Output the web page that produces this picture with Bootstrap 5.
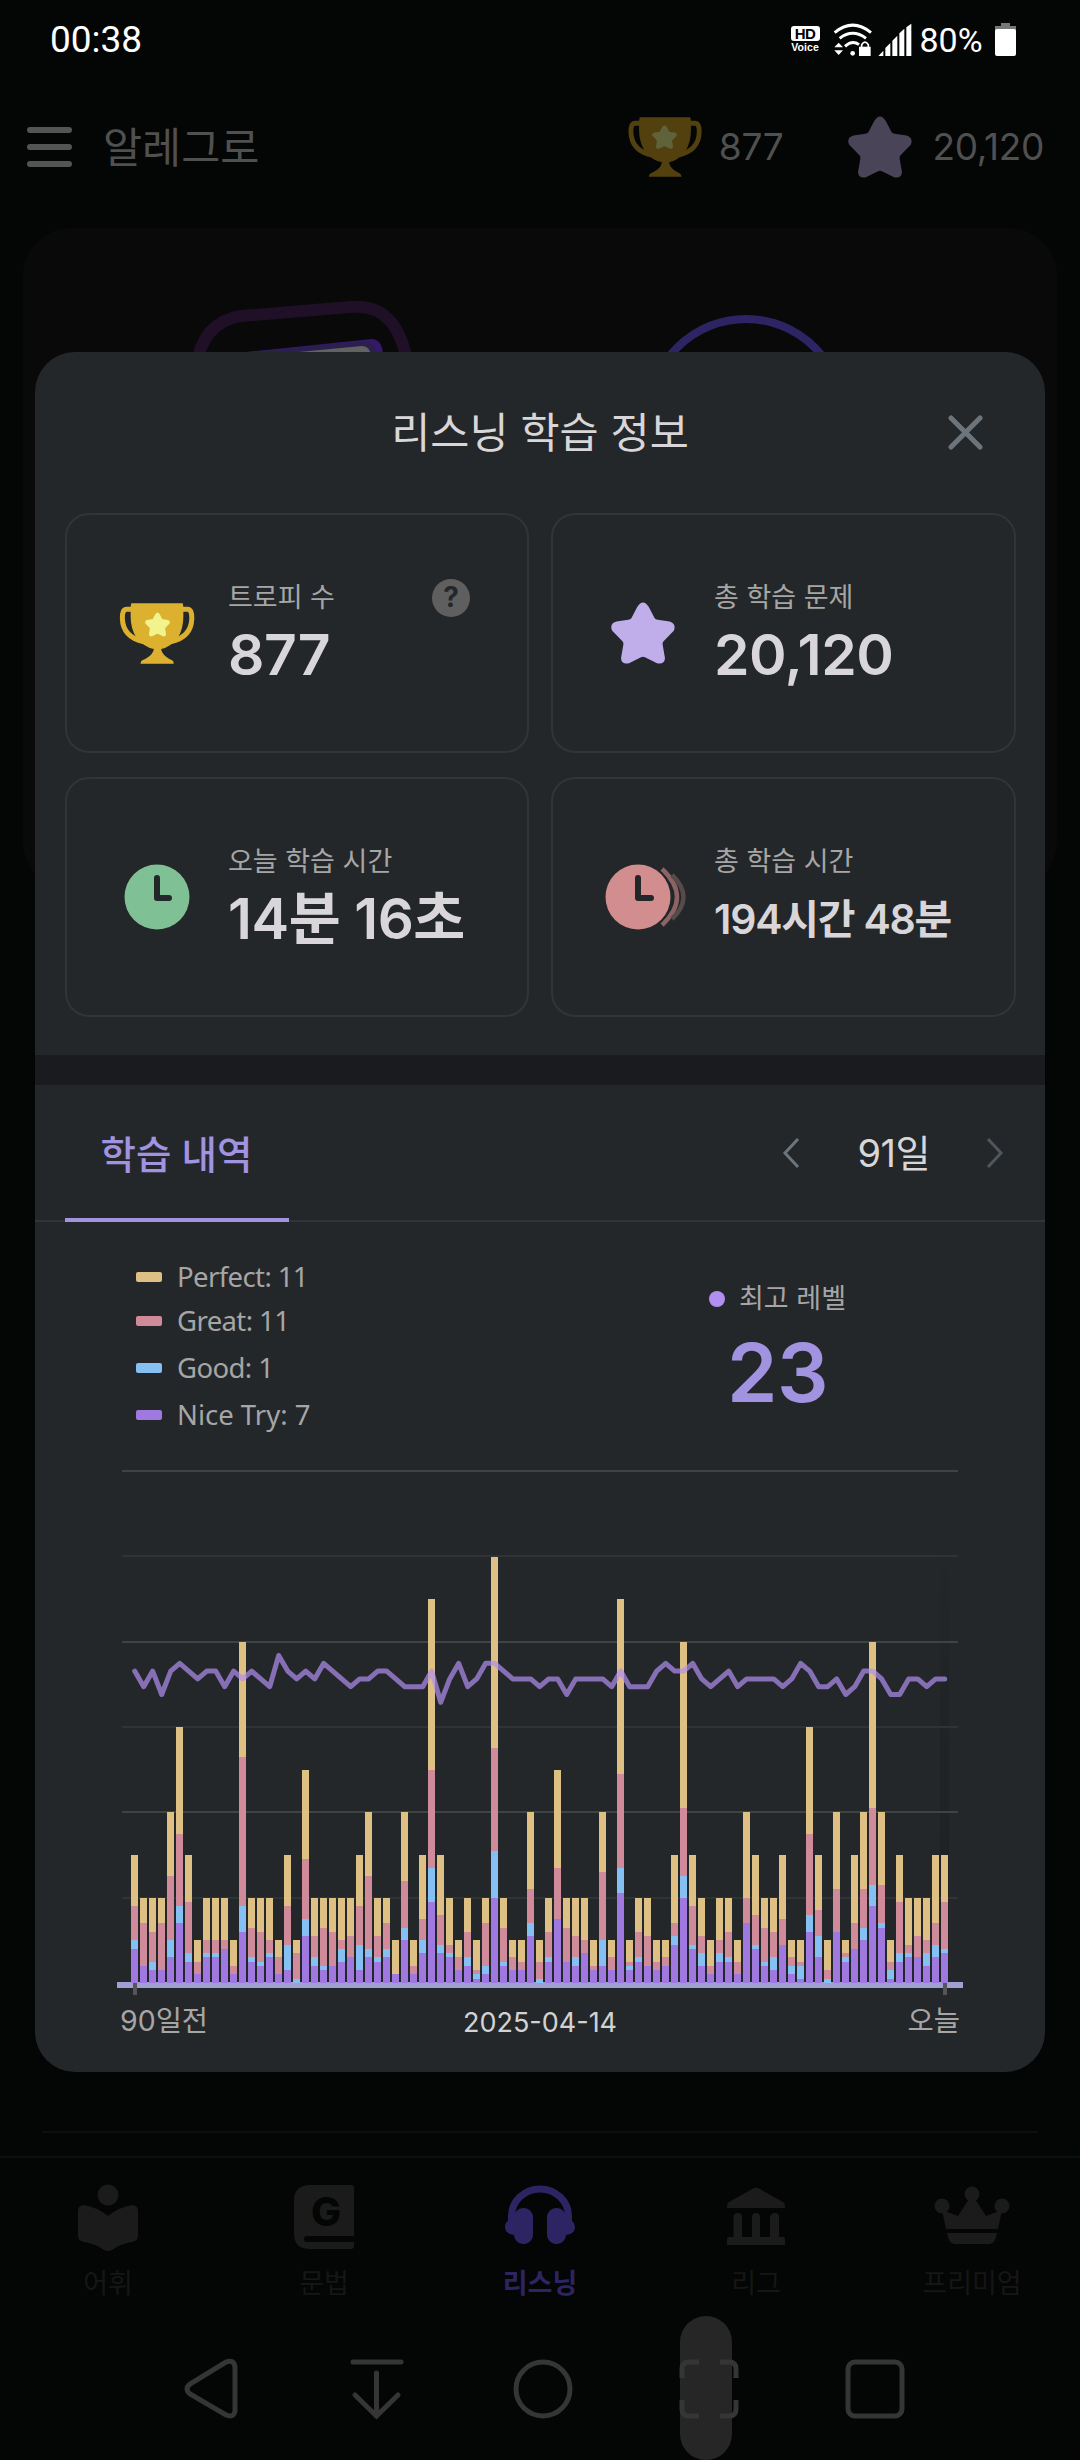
<!DOCTYPE html>
<html lang="ko" data-bs-theme="dark">
<head>
<meta charset="utf-8">
<meta name="viewport" content="width=device-width, initial-scale=1">
<title>리스닝 학습 정보</title>
<link href="https://cdn.jsdelivr.net/npm/bootstrap@5.3.0/dist/css/bootstrap.min.css" rel="stylesheet">
<style>
:root{--ko:"Inter","Noto Sans CJK KR",sans-serif;--panel:#24272a;--edge:#323437;--lav:#a293e0;--txt:#d8d6d8;--dim:#a6a6a6}
body{margin:0;background:#040505;font-family:var(--ko);line-height:1.2}
svg{display:block;flex:none}
.screen{width:1080px;height:2460px}
.statusbar{height:80px;padding:0 64px 0 50px;font-family:Roboto,sans-serif;color:#fff}
.clock-txt{font-size:37px}
.hdv{width:29px;margin-right:13px}
.hd-box{height:15px;background:#fff;color:#000;border-radius:3px;font:700 15px/15px "Liberation Sans",sans-serif;letter-spacing:-.5px}
.hd-sub{font:700 10.5px/12px "Liberation Sans",sans-serif;letter-spacing:.1px}
.pct{font-size:34px;width:64px;margin:0 11.5px 0 7px}
.appbar{height:134px;padding:0 36px 0 27px;color:#505050}
.user-name{font-size:42.5px;margin-left:30px}
.cnt{font-size:37px;letter-spacing:-.3px}
.hero{margin:14px 23px 0;height:662px;border-radius:48px;background:#0a090a}
.divider{margin:0 42px;height:2px;background:#0b0f0f}
.tabbar{height:144px;margin-top:23px;border-top:2px solid #0b0f0f;color:#161616;font-size:27px}
.tabbar .tab{padding-top:25px}
.tabbar .tab span{margin-top:11px;line-height:40px}
.tabbar .on{color:#2d2463;font-weight:700}
.sysbar{height:160px}
.touch{left:680px;top:2316px;width:52px;height:144px;border-radius:26px;background:#262626}
.sheet{left:35px;top:352px;width:1010px;height:1720px;border-radius:40px;background:var(--panel);color:var(--txt)}
.sheet-head{height:161px}
.sheet-title{font-size:42.5px}
.close-x{right:62px;top:63px}
.stats{grid-template-columns:464px 465px;grid-auto-rows:240px;gap:24px 22px;padding:0 30px}
.stat{border:2px solid var(--edge);border-radius:24px}
.stat-ico{width:161px;padding-left:18px}
.stat-label{font-size:27px;line-height:42px;padding-top:2px;color:var(--dim)}
.stat-num{font-size:57px;line-height:72px;font-weight:600;white-space:nowrap;letter-spacing:-.4px}
.stat-num.mid{font-size:56.5px}
.stat-num.sm{font-size:41px;letter-spacing:-1.2px}
.help{left:365px;top:64px;width:38px;height:38px;background:#5e5f5e;color:var(--panel);font-weight:700;font-size:28px}
.band{height:30px;margin-top:38px;background:#1a1b1e}
.tabs{height:137px;border-bottom:2px solid var(--edge);padding:0 41px 0 30px}
.tab-on{width:224px;margin-bottom:-2px;border-bottom:4px solid var(--lav);color:var(--lav);font-weight:500;font-size:38.5px;padding:7px 1px 0 0}
.days{font-size:38px;letter-spacing:-.5px;padding-top:2px}
.summary{height:248px}
.legend{padding:34px 0 0 101px;font-family:"Noto Sans",sans-serif;font-size:27.5px;color:var(--dim)}
.legend li{height:47px;letter-spacing:-.6px}
.legend li:first-child{height:41px}
.legend li:last-child{letter-spacing:0}
.legend i{width:26px;height:10px;border-radius:2px;margin-right:15px}
.best{margin-right:199px;padding-top:61px;font-size:27px;color:var(--dim)}
.best i{width:16px;height:16px;background:#b08ff0;margin-right:14px}
.best-num{font-size:81px;line-height:104px;margin-top:6px;font-weight:600;color:var(--lav);letter-spacing:-.5px}
.axis{padding:0 85px 5px 85px;height:56px;font-size:28.5px;color:var(--dim)}
.axis .mid-date{font-size:27px;color:#d2d2d2;padding-top:4px}
</style>
</head>
<body>
<svg width="0" height="0" class="position-absolute">
  <symbol id="star" viewBox="212 782 192 185"><path d="M291 796Q308 770 325 796L343 830Q346 834 352 835L388 840Q408 846 401 867L369 900Q366 904 367 910L374 950Q372 970 350 965L314 947Q308 944 302 947L266 965Q244 970 242 950L249 910Q250 904 247 900L215 867Q207 846 228 840L264 835Q270 834 273 830Z"/></symbol>
  <symbol id="cup" viewBox="266 789 227 184">
    <path d="M302 790H457L459 800V830Q459 866 443 893Q420 922 392 928C394 945 412 956 425 962Q430 965 430 972H330Q330 965 335 962C350 956 368 945 370 928Q340 922 317 893Q300 866 300 830V800Z"/>
    <path fill="none" stroke="currentColor" stroke-width="15" d="M303 808H288Q274 808 275 836Q277 892 340 906M456 808H472Q485 808 484.500 836Q483 892 420 906"/>
  </symbol>
</svg>
<div class="screen position-relative overflow-hidden">
 <div class="d-flex flex-column h-100">
  <div class="statusbar d-flex align-items-center justify-content-between">
    <span class="clock-txt">00:38</span>
    <div class="d-flex align-items-center">
      <div class="hdv text-center"><div class="hd-box">HD</div><div class="hd-sub">Voice</div></div>
      <svg width="80" height="36" viewBox="638 62 240 108" fill="#fff">
        <g fill="none" stroke="#fff" stroke-width="9"><path d="M643 94Q697 49 752 94M658 111Q697 81 737 111M674 135Q696 115 716 130"/></g>
        <circle cx="697" cy="156" r="7"/><path d="M655 124L668 138H642ZM655 161L642 147H668Z"/>
        <path d="M716 136H751V164H716Z"/><path d="M724 138V130Q734 115 744 130V138" fill="none" stroke="#fff" stroke-width="5"/>
        <path d="M774 164L789 148V164ZM795 164V140L810 125V164ZM816 164V118L831 103V164ZM837 164V96L852 82V164ZM858 164V78L873 67V164Z"/>
      </svg>
      <span class="pct">80%</span>
      <svg width="21" height="34" viewBox="0 0 21 34"><path fill="#777" d="M6 0H15V3H21V8H0V3H6Z"/><rect y="6" width="21" height="27" rx="2" fill="#fff"/></svg>
    </div>
  </div>
  <div class="appbar d-flex align-items-center">
    <svg width="46" height="42" viewBox="0 0 46 42" stroke="#545454" stroke-width="6" stroke-linecap="round"><path d="M3 4H42M3 21H42M3 38H42"/></svg>
    <span class="user-name">알레그로</span>
    <svg class="ms-auto" style="color:#52400f" width="74" height="60" fill="currentColor"><use href="#cup"/><svg x="24" y="8" width="25" height="24" fill="#60623a"><use href="#star"/></svg></svg>
    <span class="cnt" style="margin:0 65px 0 17px">877</span>
    <svg width="64" height="62" fill="#4a4459"><use href="#star"/></svg>
    <span class="cnt" style="margin-left:20px">20,120</span>
  </div>
  <div class="hero">
    <svg width="1034" height="140" viewBox="23 228 1034 140" fill="none">
      <path d="M196 368Q202 322 241 316L350 307Q399 302 408 368" stroke="#1f0f27" stroke-width="12"/>
      <path d="M228 354L372 339Q383 340 383 356Z" fill="#35186a"/><path d="M228 354L366 341Q376 342 376 356Z" fill="#292050"/>
      <path d="M288 353L362 346Q370 346 371 356Z" fill="#626262"/>
      <circle cx="746" cy="416" r="97" stroke="#2d2463" stroke-width="8"/>
    </svg>
  </div>
  <div class="divider mt-auto"></div>
  <div class="tabbar d-flex">
    <div class="tab col d-flex flex-column align-items-center"><svg width="62" height="70" viewBox="0 0 62 70" fill="#1b1b1b"><circle cx="31" cy="12" r="10.500"/><path d="M1 28Q1 22 7 22Q20 24 31 33Q42 24 55 22Q61 22 61 28V53Q61 58 55 59Q45 60 35 67Q31 69 27 67Q17 60 7 59Q1 58 1 53Z"/></svg><span>어휘</span></div>
    <div class="tab col d-flex flex-column align-items-center"><svg width="62" height="70" viewBox="0 0 62 70" fill="#1b1b1b"><path d="M16 2H58Q61 2 61 5V53H14Q11 53 11 56T14 59H61V63Q61 66 58 66H16Q1 65 1 51V17Q1 3 16 2Z"/><text x="33" y="43" text-anchor="middle" font-family="Inter,sans-serif" font-weight="800" font-size="40" fill="#040505">G</text></svg><span>문법</span></div>
    <div class="tab on col d-flex flex-column align-items-center"><svg width="70" height="70" viewBox="0 0 70 70" fill="#2d2463"><path d="M6.500 40V33A28.500 27 0 0 1 63.500 33V40" fill="none" stroke="#2d2463" stroke-width="7"/><rect x="9" y="25" width="19" height="36" rx="9"/><rect x="42" y="25" width="19" height="36" rx="9"/><path d="M12 35Q0 36 0 44T12 52ZM58 35Q70 36 70 44T58 52Z"/></svg><span>리스닝</span></div>
    <div class="tab col d-flex flex-column align-items-center"><svg width="60" height="70" viewBox="0 0 60 70" fill="#1b1b1b"><path d="M26 6Q30 3.500 34 6L57 19Q59 20 59 25H1Q1 20 3 19Z"/><path d="M7.500 56V34Q8 30 12 30T16 34V54H26V34Q26 30 30 30T34 34V54H44V34Q45 30 49 30T53 34V54H57Q59 54 59 57V62H1V57Q1 54 3 54H7.500Z"/></svg><span>리그</span></div>
    <div class="tab col d-flex flex-column align-items-center"><svg width="76" height="70" viewBox="0 0 76 70" fill="#1b1b1b"><circle cx="38" cy="11" r="7.500"/><circle cx="8" cy="23" r="7.500"/><circle cx="68" cy="23" r="7.500"/><path d="M8 27L24 33L35 16H41L52 33L68 27L64 46H12ZM13 50H63Q61 61 56 61H20Q15 61 13 50Z"/></svg><span>프리미엄</span></div>
  </div>
  <div class="sysbar">
    <svg class="position-relative z-1" width="1080" height="160" viewBox="0 2300 1080 160" fill="none" stroke="#353535" stroke-width="5" stroke-linecap="round">
      <path d="M226 2362Q234 2359 235 2367V2411Q234 2418 226 2415L190 2394Q184 2389 190 2384Z"/>
      <path d="M353 2362H401M376.500 2373V2416M355 2395L376.500 2416L398 2395"/>
      <circle cx="543" cy="2389" r="27"/>
      <g stroke-linecap="butt"><path d="M682 2378V2369Q682 2362 689 2362H699M720 2362H729Q736 2362 736 2369V2378M736 2400V2409Q736 2416 729 2416H720M699 2416H689Q682 2416 682 2409V2400"/></g>
      <rect x="848" y="2362" width="54" height="54" rx="7"/>
    </svg>
  </div>
 </div>
 <div class="touch position-absolute"></div>

 <section class="sheet position-absolute overflow-hidden">
  <div class="sheet-head position-relative d-flex align-items-center justify-content-center">
    <div class="sheet-title">리스닝 학습 정보</div>
    <svg class="close-x position-absolute" width="35" height="35" viewBox="0 0 35 35" stroke="#6d757c" stroke-width="5" stroke-linecap="round"><path d="M3 3L32 32M32 3L3 32"/></svg>
  </div>
  <div class="stats d-grid">
    <div class="stat d-flex align-items-center position-relative">
      <div class="stat-ico d-flex justify-content-center"><svg width="76" height="61" style="color:#dcb12f" fill="currentColor"><use href="#cup"/><svg x="26" y="9" width="25" height="25" fill="#f3f38e"><use href="#star"/></svg></svg></div>
      <div><div class="stat-label">트로피 수</div><div class="stat-num">877</div></div>
      <div class="help position-absolute rounded-circle d-flex align-items-center justify-content-center">?</div>
    </div>
    <div class="stat d-flex align-items-center">
      <div class="stat-ico d-flex justify-content-center"><svg width="64" height="62" fill="#bfaeea"><use href="#star"/></svg></div>
      <div><div class="stat-label">총 학습 문제</div><div class="stat-num">20,120</div></div>
    </div>
    <div class="stat d-flex align-items-center">
      <div class="stat-ico d-flex justify-content-center"><svg width="66" height="66" viewBox="0 0 66 66"><circle cx="33" cy="33" r="32.500" fill="#7fc095"/><path d="M33 14V34H45" fill="none" stroke="#24272a" stroke-width="6" stroke-linecap="round" stroke-linejoin="round"/></svg></div>
      <div><div class="stat-label">오늘 학습 시간</div><div class="stat-num mid">14분 16초</div></div>
    </div>
    <div class="stat d-flex align-items-center">
      <div class="stat-ico d-flex justify-content-center"><svg width="82" height="66" viewBox="0 0 82 66" style="margin-right:-7px"><g fill="none" stroke-width="4.500"><path d="M57 5Q87 33 57 61" stroke="#8c6465"/><path d="M67 11Q90 33 67 55" stroke="#574a4b"/></g><circle cx="33" cy="33" r="34.500" fill="#24272a"/><circle cx="33" cy="33" r="32.500" fill="#d28e8e"/><path d="M33 14V34H46" fill="none" stroke="#24272a" stroke-width="6" stroke-linecap="round" stroke-linejoin="round"/></svg></div>
      <div><div class="stat-label">총 학습 시간</div><div class="stat-num sm">194시간 48분</div></div>
    </div>
  </div>
  <div class="band"></div>
  <div class="tabs d-flex align-items-center">
    <div class="tab-on align-self-stretch d-flex align-items-center justify-content-center">학습 내역</div>
    <svg class="ms-auto" width="18" height="32" viewBox="0 0 18 32" fill="none" stroke="#6d757c" stroke-width="3"><path d="M16 2L3 16L16 30"/></svg>
    <span class="days" style="margin:0 56px 0 58px">91일</span>
    <svg width="18" height="32" viewBox="0 0 18 32" fill="none" stroke="#50565b" stroke-width="3"><path d="M2 2L15 16L2 30"/></svg>
  </div>
  <div class="summary d-flex justify-content-between">
    <ul class="legend list-unstyled mb-0">
      <li class="d-flex align-items-center"><i style="background:#dfc084"></i>Perfect: 11</li>
      <li class="d-flex align-items-center"><i style="background:#d08b9b"></i>Great: 11</li>
      <li class="d-flex align-items-center"><i style="background:#86bff2"></i>Good: 1</li>
      <li class="d-flex align-items-center"><i style="background:#9f79e0"></i>Nice Try: 7</li>
    </ul>
    <div class="best">
      <div class="d-flex align-items-center"><i class="rounded-circle"></i>최고 레벨</div>
      <div class="best-num text-center">23</div>
    </div>
  </div>
  <svg id="chart" width="1010" height="526" viewBox="35 1470 1010 526"></svg>
  <div class="axis d-flex justify-content-between align-items-center position-relative">
    <span>90일전</span><span class="mid-date position-absolute start-50 translate-middle-x">2025-04-14</span><span>오늘</span>
  </div>
 </section>
</div>
<script src="https://cdn.jsdelivr.net/npm/bootstrap@5.3.0/dist/js/bootstrap.bundle.min.js"></script>
<script>
// Cumulative counts per day: nice try, good, great, perfect
const days = "8,10,18,30 4,4,14,20 3,5,12,20 3,3,14,20 6,10,25,40 14,18,35,60 5,7,19,30 2,2,5,10 6,7,10,20 6,7,10,20 8,8,10,20 2,2,4,10 12,18,53,80 5,6,13,20 4,5,12,20 6,7,10,20 2,2,6,10 3,9,18,30 0,1,7,10 11,15,29,50 4,6,11,20 3,4,13,20 4,4,12,20 5,8,10,20 6,6,11,20 3,9,18,30 6,8,25,40 5,6,11,20 6,8,14,20 2,2,2,10 10,13,24,40 2,2,4,10 7,10,15,30 19,27,50,90 7,9,16,30 6,7,9,20 3,3,6,10 4,6,12,20 1,2,3,10 2,4,14,20 20,31,55,100 4,5,13,20 3,3,6,10 3,3,5,10 11,14,22,40 0,1,5,10 5,6,12,20 15,15,27,50 5,5,13,20 4,6,11,20 7,7,10,20 3,3,4,10 4,10,26,40 3,3,6,10 21,27,49,90 3,4,5,10 5,6,12,20 4,4,11,20 3,3,5,10 4,4,6,10 9,11,14,30 20,25,41,80 8,9,18,30 4,7,11,20 2,2,4,10 5,7,10,20 5,6,12,20 2,2,5,10 14,14,20,40 8,9,16,30 4,5,13,20 3,6,12,20 9,9,15,30 2,4,6,10 1,4,5,10 12,16,35,60 6,11,17,30 0,1,3,10 12,12,22,40 5,6,7,10 8,8,14,30 10,13,22,40 18,23,41,80 13,14,23,40 1,3,5,10 5,7,19,30 6,7,9,20 6,6,11,20 4,7,10,20 6,9,14,30 7,8,19,30".split(" ").map(d => d.split(",").map(Number));
const levels = [21,19,21,18,21,22,21,20,21,21,19,21,20,21,20,19,23,21,20,21,20,22,21,20,19,20,20,21,21,20,19,19,19,21,17,20,22,19,20,22,22,21,20,20,20,19,20,20,18,20,20,20,20,19,21,19,19,19,21,22,21,21,22,20,19,20,21,19,20,20,20,20,19,20,22,21,19,19,20,18,19,21,21,20,18,18,20,20,19,20,20];
const colors = ["#9f79e0", "#86bff2", "#d08b9b", "#dfc084"];
const base = 1983, unit = 4.265;
let out = '<defs><linearGradient id="today" x2="0" y2="1"><stop stop-color="#24272a"/><stop offset=".5" stop-color="#202326"/><stop offset="1" stop-color="#1e2023"/></linearGradient></defs><rect x="940" y="1530" width="9" height="453" fill="url(#today)"/>';
[1470, 1555, 1641, 1726, 1811, 1897].forEach((y, i) => {
  out += `<rect x="122" y="${y}" width="836" height="2" fill="${i % 2 ? "#303336" : "#3e4346"}"/>`;
});
out += '<rect x="117" y="1982" width="846" height="6" fill="#a09fd4"/>';
days.forEach((d, i) => {
  let prev = 0;
  d.forEach((v, k) => {
    const top = Math.round(base - v * unit), bottom = Math.round(base - prev * unit);
    if (bottom > top) out += `<rect x="${131 + 9 * i}" y="${top}" width="7" height="${bottom - top}" fill="${colors[k]}"/>`;
    prev = v;
  });
});
out += `<polyline fill="none" stroke="#b08ff0" stroke-opacity=".7" stroke-width="5" stroke-linejoin="round" stroke-linecap="round" points="${levels.map((l, i) => (134.7 + 9 * i) + "," + (1655.5 + (23 - l) * 7.8).toFixed(1)).join(" ")}"/>`;
out += '<rect x="133" y="1983" width="4" height="12" fill="#555"/><rect x="943" y="1983" width="4" height="12" fill="#555"/>';
document.getElementById("chart").innerHTML = out;
</script>
</body>
</html>
